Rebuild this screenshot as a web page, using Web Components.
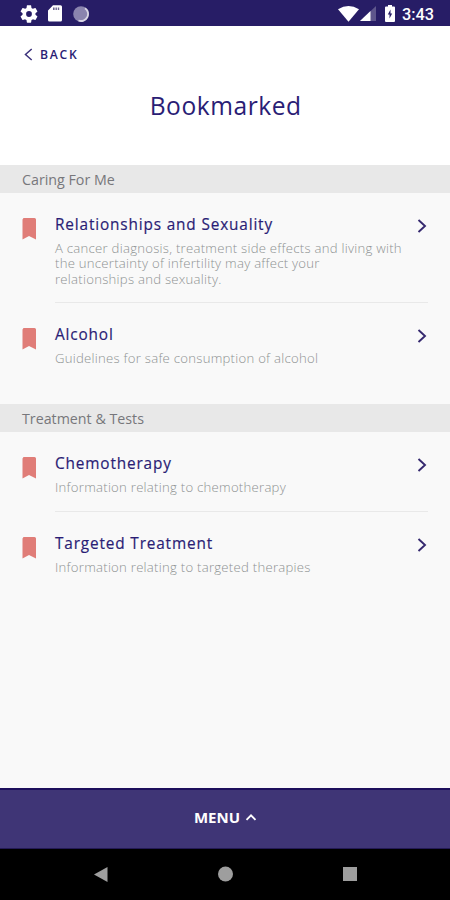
<!DOCTYPE html>
<html lang="en"><head><meta charset="utf-8"><title>Bookmarked</title>
<style>body{margin:0;background:#f9f9f9;font-family:"Open Sans","Noto Sans",sans-serif}</style></head>
<body>
<app-screen>
<status-bar slot="top" time="3:43"></status-bar>
<page-header slot="top" heading="Bookmarked"></page-header>
<bookmark-section heading="Caring For Me">
<bookmark-item heading="Relationships and Sexuality">A cancer diagnosis, treatment side effects and living with<br>the uncertainty of infertility may affect your<br>relationships and sexuality.</bookmark-item>
<bookmark-item heading="Alcohol">Guidelines for safe consumption of alcohol</bookmark-item>
</bookmark-section>
<bookmark-section heading="Treatment &amp; Tests">
<bookmark-item heading="Chemotherapy">Information relating to chemotherapy</bookmark-item>
<bookmark-item heading="Targeted Treatment">Information relating to targeted therapies</bookmark-item>
</bookmark-section>
<menu-bar slot="bottom">MENU</menu-bar>
<system-nav slot="bottom"></system-nav>
</app-screen>
<script>
const define=(name,render)=>customElements.define(name,class extends HTMLElement{
  constructor(){super();this.attachShadow({mode:"open"});}
  connectedCallback(){
    const t=document.createElement("template");
    t.innerHTML=render();
    this.shadowRoot.replaceChildren(t.content.cloneNode(true));
    this.shadowRoot.querySelectorAll("[data-attr]").forEach(e=>e.textContent=this.getAttribute(e.dataset.attr));
  }
});
define("app-screen",()=>`<style>:host{display:flex;flex-direction:column;width:450px;height:900px;overflow:hidden}main{flex:1;min-height:0;background:#f9f9f9}</style>
<slot name="top"></slot><main><slot></slot></main><slot name="bottom"></slot>`);
define("status-bar",()=>`<style>:host{display:flex;box-sizing:border-box;height:26px;background:#271d66;align-items:center;justify-content:space-between;padding:1px 16px 0 20px;color:#fff;font:500 16.3px/26px Roboto,sans-serif}
.g{display:flex;align-items:center}svg{display:block}.time{margin-left:7px;padding-top:2px}</style>
<div class="g"><svg width="18" height="18" viewBox="2 2 20 20"><path fill="#fff" d="M19.14 12.94c.04-.3.06-.61.06-.94s-.02-.64-.07-.94l2.03-1.58c.18-.14.23-.41.12-.61l-1.92-3.32c-.12-.22-.37-.29-.59-.22l-2.39.96c-.5-.38-1.03-.7-1.62-.94l-.36-2.54c-.04-.24-.24-.41-.48-.41h-3.84c-.24 0-.43.17-.47.41l-.36 2.54c-.59.24-1.13.57-1.62.94l-2.39-.96c-.22-.08-.47 0-.59.22L2.74 8.87c-.12.21-.08.47.12.61l2.03 1.58c-.05.3-.09.63-.09.94s.02.64.07.94l-2.03 1.58c-.18.14-.23.41-.12.61l1.92 3.32c.12.22.37.29.59.22l2.39-.96c.5.38 1.03.7 1.62.94l.36 2.54c.05.24.24.41.48.41h3.84c.24 0 .44-.17.47-.41l.36-2.54c.59-.24 1.13-.56 1.62-.94l2.39.96c.22.08.47 0 .59-.22l1.92-3.32c.12-.22.07-.47-.12-.61l-2.01-1.58zM12 15.2a3.2 3.2 0 1 1 0-6.4 3.2 3.2 0 0 1 0 6.4z"/></svg>
<svg style="margin-left:10px" width="14" height="17" viewBox="0 0 14 17"><path fill="#fff" d="M5 .3h7.5A1.500 1.500 0 0 1 14 1.800V15a1.500 1.500 0 0 1-1.500 1.500h-11A1.500 1.500 0 0 1 0 15V5.500z"/><path fill="#6c6690" d="M5 2.500h1.600v2.500H5zm2.500 0h1.400v2.500H7.500zm2.300 0h1.400v2.500H9.800z"/></svg>
<svg style="margin-left:11px" width="16" height="16" viewBox="0 0 16 16"><circle cx="8" cy="8" r="7.800" fill="#8a84ae"/><path fill="none" stroke="#d8d5e4" stroke-width="1.800" d="M12 2.200A7 7 0 0 1 5.500 14.500"/></svg></div>
<div class="g"><svg width="21" height="16" viewBox="0 0 21 16"><path fill="#fff" d="M0 3.200Q10.500-3.200 21 3.200L10.500 15.800z"/></svg>
<svg style="margin-left:1px" width="16" height="15" viewBox="0 0 16 15"><path fill="#5e568c" d="M16 0v15H0z"/><path fill="#fff" d="M10.500 5v10H0z"/></svg>
<svg style="margin-left:9px" width="10" height="17" viewBox="0 0 10 17"><path fill="#fff" d="M3 0h4v1.500h2a1 1 0 0 1 1 1V16a1 1 0 0 1-1 1H1a1 1 0 0 1-1-1V2.500a1 1 0 0 1 1-1h2z"/><path fill="#271d66" d="M5.500 4.500v4h1.700L4.500 13.500v-4H2.800z"/></svg><span class="time" data-attr="time"></span></div>`);
define("page-header",()=>`<style>:host{display:flex;flex-direction:column;box-sizing:border-box;height:139px;background:#fff;color:#2a1d75;padding-top:17px}
.back{display:flex;align-items:center;height:22px;padding-left:24px;font-size:12.200px;font-weight:600;letter-spacing:1.750px}svg{margin-right:7px}
h1{margin:23px 0 0;text-align:center;font:400 26px/34px "Open Sans",sans-serif;transform:translateX(.7px) scaleX(.944);letter-spacing:.6px}</style>
<div class="back"><svg width="9" height="13" viewBox="0 0 9 13"><path d="M7.700 1L1.500 6.500l6.200 5.500" fill="none" stroke="#3b317b" stroke-width="1.500"/></svg><span>BACK</span></div><h1 data-attr="heading"></h1>`);
define("bookmark-section",()=>`<style>:host{display:block;padding-bottom:21px}h2{margin:0;height:28px;padding:1px 22px 0;box-sizing:border-box;background:#e8e8e8;color:#77777b;font:400 14.250px/28px "Open Sans",sans-serif}</style><h2 data-attr="heading"></h2><slot></slot>`);
define("bookmark-item",()=>`<style>:host{display:grid;grid-template-columns:33px 1fr;padding:0 22px}
.mark{margin-top:25px}.body{display:grid;grid-template-columns:1fr auto;padding:20px 0 15.500px;border-bottom:1px solid #e9e9e9}
:host(:last-child) .body{border-color:transparent}
h3{margin:0;font:400 17px/22px "Open Sans",sans-serif;transform:scaleX(.902);transform-origin:0 50%;color:#2a1d75;letter-spacing:.95px;-webkit-text-stroke:.2px}
p{grid-column:1/3;margin:6px 0 0;font-size:13.150px;line-height:15.300px;font-weight:300;letter-spacing:.26px;color:#8e9292;white-space:nowrap}
.go{margin:6px 1px 0 0}</style>
<svg class="mark" width="14" height="22" viewBox="0 0 14 22"><path fill="#e07d78" d="M1.500 0h11A1.500 1.500 0 0 1 14 1.500V21.500L7 18 .5 21.500V1.500z"/></svg>
<div class="body"><h3 data-attr="heading"></h3><svg class="go" width="10" height="14" viewBox="0 0 10 14"><path d="M1.500 1l6.500 6-6.500 6" fill="none" stroke="#35296f" stroke-width="1.900"/></svg><p><slot></slot></p></div>`);
define("menu-bar",()=>`<style>:host{display:flex;box-sizing:border-box;height:61px;background:#3f3576;border-top:2px solid #1d0f5c;border-bottom:1px solid #241a55;align-items:center;justify-content:center;color:#fff;font-weight:700;font-size:15px;padding:0 0 4px 1px}svg{margin-left:5px}</style><slot></slot><svg width="12" height="8" viewBox="0 0 11 8"><path d="M1 6.800l4.500-4.500L10 6.800" fill="none" stroke="#fff" stroke-width="1.900"/></svg>`);
define("system-nav",()=>`<style>:host{display:flex;height:51px;background:#000;align-items:center;justify-content:space-between;padding:0 93px 1px 94px;box-sizing:border-box}svg{display:block}</style>
<svg width="14" height="15"><path fill="#9e9e9e" d="M0 7.500L13.500 0v15z"/></svg><svg width="16" height="16"><circle cx="7.500" cy="8" r="7.500" fill="#9e9e9e"/></svg><svg width="14" height="14"><path fill="#9e9e9e" d="M0 0h14v14H0z"/></svg>`);
</script>
</body></html>
